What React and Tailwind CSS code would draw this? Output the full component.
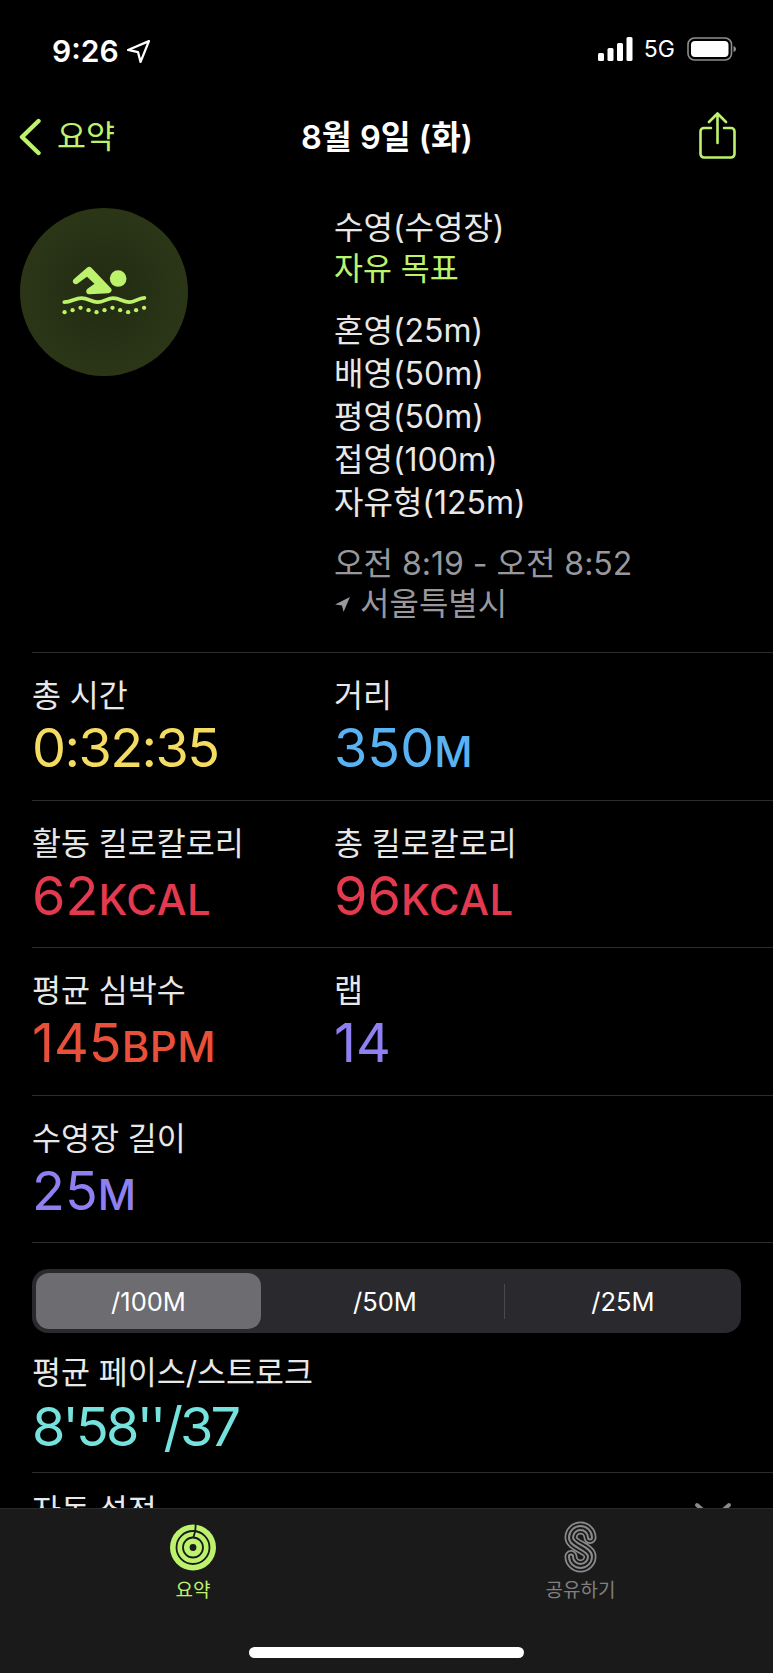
import React from "react";

const LIME = "text-[#bdf36c]";

const Metric = ({ label, value, unit, color, tight }) => (
  <div>
    <div className="h-[43px] text-[31.5px] leading-[42px] text-[#e8e8e8]">{label}</div>
    <div className={`h-[60px] text-[54px] leading-[60px] whitespace-nowrap ${color} ${tight ? "tracking-[-1.6px]" : ""}`}>
      {value}
      {unit && <span className="text-[42px] font-medium tracking-[0.5px]">{unit}</span>}
    </div>
  </div>
);

const Row = ({ children }) => (
  <div className="ml-8 grid h-[147.5px] grid-cols-[302px_1fr] border-t border-[#2c2c2e] pt-[22px]">
    {children}
  </div>
);

const SwimIcon = () => (
  <svg viewBox="60 55 505 505" className="h-full w-full">
    <circle cx="355" cy="267" r="25" fill="#bdf36c" />
    <path
      d="M228 275 L268 241 L326 302 L268 305 L298 284 L262 250 Z"
      fill="#bdf36c"
      stroke="#bdf36c"
      strokeWidth="18"
      strokeLinejoin="round"
    />
    <path
      d="M193 338 C215 338 225 326 245 326 C265 326 275 338 292 338 C312 338 322 326 340 326 C360 326 370 338 388 338 C405 338 415 326 434 325"
      fill="none"
      stroke="#bdf36c"
      strokeWidth="11"
      strokeLinecap="round"
    />
    {[
      [194, 368],
      [218, 362],
      [242, 355],
      [266, 362],
      [290, 368],
      [314, 362],
      [338, 355],
      [361, 362],
      [385, 368],
      [409, 362],
      [433, 355],
    ].map(([x, y]) => (
      <circle key={x} cx={x} cy={y} r="6.5" fill="#bdf36c" />
    ))}
  </svg>
);

const RingsIcon = () => (
  <svg viewBox="0 0 46 47" className="h-[47px] w-[46px]">
    <circle cx="23" cy="23.5" r="23" fill="#bdf36c" />
    <circle cx="23" cy="23.5" r="16.5" fill="none" stroke="#1a1a1a" strokeWidth="1.8" />
    <circle cx="23" cy="23.5" r="10" fill="none" stroke="#1a1a1a" strokeWidth="1.8" />
    <circle cx="23" cy="23.5" r="3.4" fill="#1a1a1a" />
    <path d="M25.700 0 L25.500 4 L25 8 L23.300 13.500" fill="none" stroke="#1a1a1a" strokeWidth="1.8" />
  </svg>
);

const S_PATH = "M26 16.500 A9.500 9.500 0 0 0 7 16.500 C7 25 26 27 26 35.500 A9.500 9.500 0 0 1 7 35.500";

const SharingIcon = () => (
  <svg viewBox="0 0 33 52" className="h-[52px] w-[33px]" fill="none" strokeLinecap="round">
    <path d={S_PATH} stroke="#8a8a8a" strokeWidth="13" />
    <path d={S_PATH} stroke="#1a1a1a" strokeWidth="9.500" />
    <path d={S_PATH} stroke="#8a8a8a" strokeWidth="6" />
    <path d={S_PATH} stroke="#1a1a1a" strokeWidth="2" />
  </svg>
);

const App = () => (
  <div className="relative h-[1673px] w-[773px] overflow-hidden bg-black font-['Inter','Noto_Sans_CJK_KR',sans-serif] text-white">
    <div className="flex h-[102px] items-start justify-between pl-[52px] pr-[37px] pt-[34px]">
      <div className="flex items-center gap-[7px]">
        <span className="text-[30px] leading-[34px] font-semibold">9:26</span>
        <svg viewBox="0 0 24 24" className="h-[25px] w-[25px]" fill="none" stroke="white" strokeWidth="2.2" strokeLinejoin="round">
          <path d="M22 2 L2 10.500 L11.500 12.500 L14 22 Z" />
        </svg>
      </div>
      <div className="flex items-center pt-[3px]">
        <svg viewBox="0 0 35 24" className="h-[24px] w-[35px]" fill="white">
          <rect x="0" y="16" width="6" height="8" rx="1.500" />
          <rect x="9.500" y="11" width="6" height="13" rx="1.500" />
          <rect x="19" y="6" width="6" height="18" rx="1.500" />
          <rect x="28.500" y="0" width="6" height="24" rx="1.500" />
        </svg>
        <span className="ml-[11px] text-[23px] leading-[24px]">5G</span>
        <svg viewBox="0 0 49 24" className="ml-[12px] h-[24px] w-[49px]">
          <rect x="1" y="1" width="43.500" height="22" rx="6.500" fill="none" stroke="#8e8e8e" strokeWidth="1.600" />
          <rect x="4" y="4" width="37.500" height="16" rx="4" fill="white" />
          <path d="M46.500 9 C48 9.500 49 10.500 49 12 C49 13.500 48 14.500 46.500 15 Z" fill="#8e8e8e" />
        </svg>
      </div>
    </div>

    <div className="relative flex h-[88px] items-start justify-between pl-[19px] pr-[37px] pt-[10px]">
      <div className={`mt-[5px] flex items-center gap-[16px] ${LIME}`}>
        <svg viewBox="0 0 22 38" className="h-[38px] w-[22px]" fill="none" stroke="#bdf36c" strokeWidth="4.400" strokeLinecap="round" strokeLinejoin="round">
          <path d="M19.500 3 L3 19 L19.500 35" />
        </svg>
        <span className="text-[31.5px] leading-[40px]">요약</span>
      </div>
      <div className="absolute left-[301px] top-[11px] text-[32.500px] leading-[50px] font-semibold whitespace-nowrap">8월 9일 (화)</div>
      <svg viewBox="0 0 37 48" className="h-[48px] w-[37px]" fill="none" stroke="#bdf36c" strokeWidth="2.600" strokeLinecap="round" strokeLinejoin="round">
        <path d="M12 16 H5 A3.500 3.500 0 0 0 1.500 19.500 V42 A3.500 3.500 0 0 0 5 45.500 H32 A3.500 3.500 0 0 0 35.500 42 V19.500 A3.500 3.500 0 0 0 32 16 H25" />
        <path d="M18.500 31 V2 M10 10 L18.500 1.500 L27 10" />
      </svg>
    </div>

    <div className="grid h-[462px] grid-cols-[334px_1fr]">
      <div className="ml-[20px] mt-[18px] h-[168px] w-[168px] rounded-full bg-radial from-[#222b12] to-[#2f3a19]">
        <SwimIcon />
      </div>
      <div className="pt-[17px] text-[32px] text-[#e8e8e8]">
        <div className="leading-[41px]">수영(수영장)</div>
        <div className={`leading-[41px] text-[31.5px] ${LIME}`}>자유 목표</div>
        <div className="mt-[20px] leading-[43px]">
          <div>혼영(25m)</div>
          <div>배영(50m)</div>
          <div>평영(50m)</div>
          <div>접영(100m)</div>
          <div>자유형(125m)</div>
        </div>
        <div className="mt-[20px] leading-[40px] text-[#98989d]">
          <div>오전 8:19 - 오전 8:52</div>
          <div className="flex items-center gap-[9px]">
            <svg viewBox="0 0 16 16" className="h-[17px] w-[17px]" fill="#98989d">
              <path d="M15 1 L1 8 L7.500 9 L9 15 Z" />
            </svg>
            서울특별시
          </div>
        </div>
      </div>
    </div>

    <Row>
      <Metric label="총 시간" value="0:32:35" color="text-[#f4dc62]" tight />
      <Metric label="거리" value="350" unit="M" color="text-[#59b3f2]" />
    </Row>
    <Row>
      <Metric label="활동 킬로칼로리" value="62" unit="KCAL" color="text-[#e33a50]" />
      <Metric label="총 킬로칼로리" value="96" unit="KCAL" color="text-[#e33a50]" />
    </Row>
    <Row>
      <Metric label="평균 심박수" value="145" unit="BPM" color="text-[#e8503a]" />
      <Metric label="랩" value="14" color="text-[#8f80f2]" />
    </Row>
    <Row>
      <Metric label="수영장 길이" value="25" unit="M" color="text-[#8f80f2]" />
    </Row>

    <div className="ml-8 h-[230px] border-t border-[#2c2c2e] pt-[26px]">
      <div className="flex h-[64px] w-[709px] items-center rounded-[16px] bg-[#2a2a2e] p-[4px] text-[25.500px]">
        <div className="flex h-[56px] w-[225px] items-center justify-center rounded-[13px] bg-[#6c6c71] pt-[2px]">/100M</div>
        <div className="flex h-[56px] w-[243px] items-center justify-center pl-[5px] pt-[2px]">/50M</div>
        <div className="h-[35px] w-px bg-[#4a4a4e]" />
        <div className="flex h-[56px] flex-1 items-center justify-center pl-[4px] pt-[2px]">/25M</div>
      </div>
      <div className="mt-[19px] h-[42px] text-[31.5px] leading-[42px] text-[#e8e8e8]">평균 페이스/스트로크</div>
      <div className="mt-[3px] h-[60px] text-[54px] leading-[60px] tracking-[-2.800px] text-[#76e2dd]">8'58''/37</div>
    </div>

    <div className="ml-8 flex items-start justify-between border-t border-[#2c2c2e] pr-[41px] pt-[17px]">
      <div className="text-[31.5px] leading-[42px] text-[#e8e8e8]">자동 설정</div>
      <svg viewBox="0 0 38 20" className="mt-[12px] h-[20px] w-[38px]" fill="none" stroke="#8a8a8a" strokeWidth="4" strokeLinecap="round" strokeLinejoin="round">
        <path d="M3 3 L19 17 L35 3" />
      </svg>
    </div>

    <div className="absolute inset-x-0 bottom-0 h-[165px] border-t border-[#2a2a2a] bg-[#1a1a1a]">
      <div className="grid grid-cols-2 pt-[12px]">
        <div className="ml-[140px] flex w-[106px] flex-col items-center">
          <div className="flex h-[52px] items-center">
            <RingsIcon />
          </div>
          <div className={`mt-[6px] text-[19px] leading-[24px] ${LIME}`}>요약</div>
        </div>
        <div className="ml-[141px] flex w-[106px] flex-col items-center">
          <SharingIcon />
          <div className="mt-[6px] text-[19px] leading-[24px] text-[#808080]">공유하기</div>
        </div>
      </div>
      <div className="absolute bottom-[15px] left-[249px] h-[11px] w-[275px] rounded-full bg-white" />
    </div>
  </div>
);

export default App;
